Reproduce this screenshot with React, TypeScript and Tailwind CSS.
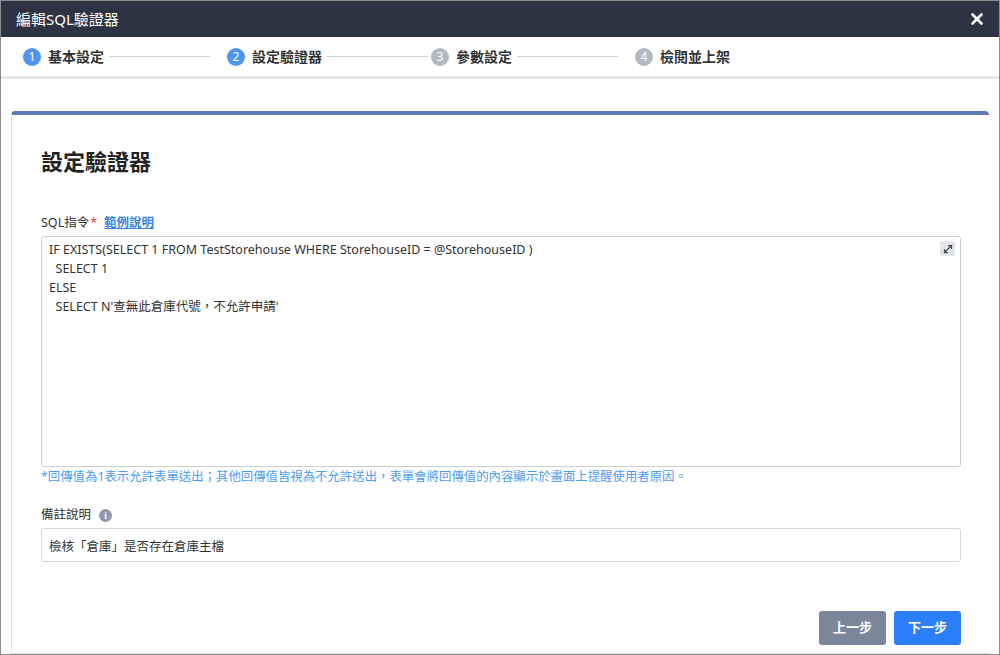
import { X, MoveDiagonal } from "lucide-react";

const font = { fontFamily: '"Noto Sans", "Noto Sans CJK TC", sans-serif' };

const steps = [
  { n: 1, label: "基本設定", done: true, line: "w-[101px] mr-[17px]" },
  { n: 2, label: "設定驗證器", done: true, line: "w-[101px] mr-[3px]" },
  { n: 3, label: "參數設定", done: false, line: "w-[101px] mr-[17px]" },
  { n: 4, label: "檢閱並上架", done: false, line: "" },
];

const sql = `IF EXISTS(SELECT 1 FROM TestStorehouse WHERE StorehouseID = @StorehouseID )
  SELECT 1
ELSE
  SELECT N'查無此倉庫代號，不允許申請'`;

function Stepper() {
  return (
    <div className="h-[42px] flex items-center pl-[22px] border-b-[3px] border-[#e6e7ea] shrink-0">
      {steps.map((s) => (
        <div key={s.n} className="flex items-center">
          <span
            className={`w-[18px] h-[18px] rounded-full flex items-center justify-center text-white text-[12px] leading-none ${
              s.done ? "bg-[#4f95f0]" : "bg-[#b3b8c2]"
            }`}
          >
            {s.n}
          </span>
          <span className="ml-[7px] text-[14px] font-semibold text-[#333]">{s.label}</span>
          {s.line && <span className={`ml-[5px] h-px bg-[#cfcfcf] ${s.line}`} />}
        </div>
      ))}
    </div>
  );
}

export default function App() {
  return (
    <div
      className="w-[1000px] h-[655px] border border-[#8c8c8c] flex flex-col overflow-hidden bg-white"
      style={font}
    >
      <header className="h-[36px] bg-[#2e3344] flex items-center justify-between pl-[15px] pr-[13px] shrink-0">
        <h1 className="text-[15px] text-white">編輯SQL驗證器</h1>
        <X className="w-[18px] h-[18px] text-white" strokeWidth={3.5} />
      </header>

      <Stepper />

      <div className="flex-1 flex flex-col pt-[32px] pl-[10px] pr-[10px] min-h-0">
        <div className="flex-1 flex flex-col border-t-4 border-t-[#5b7ab6] border-l border-l-[#e2e2e2] border-b border-b-[#e2e2e2] rounded-tl-[4px] rounded-tr-[4px] pl-[29px] pr-[28px] pt-[31px]">
          <h2 className="text-[22px] font-semibold text-[#222] leading-[30px]">設定驗證器</h2>

          <div className="mt-[38px] flex items-center text-[12.5px] leading-[18px]">
            <span className="text-[#333]">SQL指令</span>
            <span className="text-[#e5484d] ml-[1px]">*</span>
            <a className="ml-[7px] text-[#3a82e8] underline font-semibold">範例說明</a>
          </div>

          <div className="relative mt-[4px]">
            <textarea
              readOnly
              defaultValue={sql}
              className="block w-full h-[231px] resize-none border border-[#cfcfcf] rounded-[3px] px-[7px] py-[3px] text-[12.5px] leading-[19px] text-[#333] outline-none"
              style={font}
            />
            <span className="absolute top-[5px] right-[6px] w-[15px] h-[15px] rounded-[2px] bg-[#e4e6ea] flex items-center justify-center">
              <MoveDiagonal className="w-[12px] h-[12px] text-[#3f4756]" strokeWidth={2.5} />
            </span>
          </div>

          <p className="mt-[1px] text-[12.4px] leading-[18px] text-[#4d9cf2]">
            *回傳值為1表示允許表單送出；其他回傳值皆視為不允許送出，表單會將回傳值的內容顯示於畫面上提醒使用者原因。
          </p>

          <div className="mt-[20px] flex items-center gap-[8px] text-[12.5px] leading-[18px] text-[#333]">
            <span>備註說明</span>
            <span className="w-[13px] h-[13px] rounded-full bg-[#8e99ad] text-white text-[9px] font-bold flex items-center justify-center leading-none">
              i
            </span>
          </div>

          <input
            readOnly
            defaultValue="檢核「倉庫」是否存在倉庫主檔"
            className="mt-[4px] w-full h-[34px] border border-[#d6d6d6] rounded-[3px] px-[7px] text-[12.5px] text-[#333] outline-none"
            style={font}
          />

          <div className="mt-auto mb-[8px] flex justify-end gap-[8px]">
            <button className="w-[67px] h-[34px] rounded-[3px] bg-[#7c869b] text-white text-[13px] font-semibold">
              上一步
            </button>
            <button className="w-[67px] h-[34px] rounded-[3px] bg-[#2b7ff8] text-white text-[13px] font-semibold">
              下一步
            </button>
          </div>
        </div>
      </div>
    </div>
  );
}
